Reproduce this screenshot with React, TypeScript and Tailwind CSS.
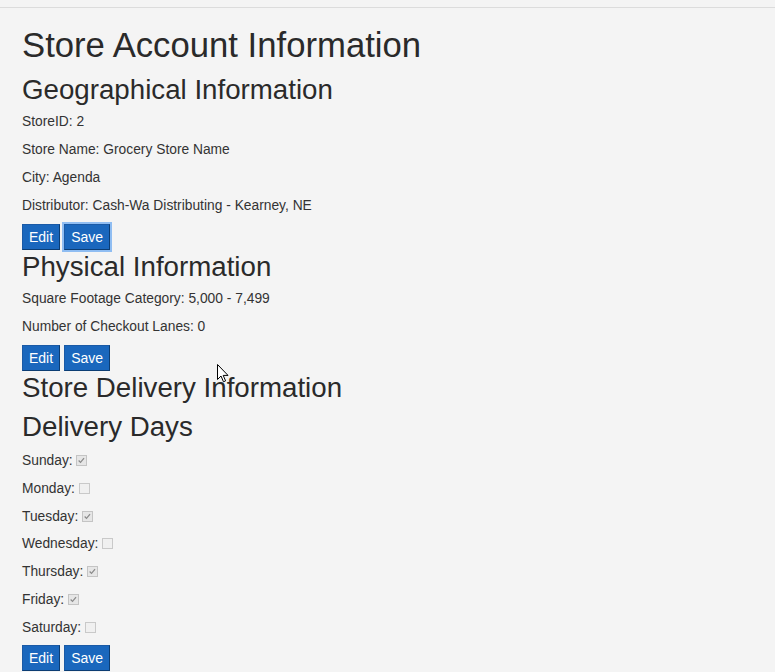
import React from 'react';

const days: { name: string; checked: boolean }[] = [
  { name: 'Sunday', checked: true },
  { name: 'Monday', checked: false },
  { name: 'Tuesday', checked: true },
  { name: 'Wednesday', checked: false },
  { name: 'Thursday', checked: true },
  { name: 'Friday', checked: true },
  { name: 'Saturday', checked: false },
];

function Heading({ children, className = '' }: { children: React.ReactNode; className?: string }) {
  return (
    <h2 className={`text-[27.7px] leading-[30px] pt-[2px] font-normal text-[#2a2a2a] mb-[7px] ${className}`}>
      {children}
    </h2>
  );
}

function Line({ children }: { children: React.ReactNode }) {
  return <p className="text-[13.8px] leading-[20px] mb-[8px]">{children}</p>;
}

function Buttons({ focusSave = false }: { focusSave?: boolean }) {
  const base =
    'inline-block align-top h-[26px] px-[6px] text-[14px] leading-[20px] text-white bg-[#1a67bd] border border-[#1a5aa6] border-r-[#0c3d73] border-b-[#0c3d73]';
  return (
    <div className="flex gap-[4px] h-[26px]">
      <button className={base}>Edit</button>
      <button className={`${base} ${focusSave ? 'ring-2 ring-[#8fbdf2]' : ''}`}>Save</button>
    </div>
  );
}

function Check({ checked }: { checked: boolean }) {
  return (
    <span
      className={`inline-block align-[-1px] ml-[0px] w-[11px] h-[11px] border ${
        checked ? 'border-[#c4c4c4] bg-[#e6e6e6]' : 'border-[#c9c9c9] bg-[#f0f0f0]'
      }`}
    >
      {checked && (
        <svg viewBox="0 0 11 11" className="w-[9px] h-[9px]">
          <path d="M2 5.5 L4.3 7.8 L8.6 2.6" fill="none" stroke="#8a8a8a" strokeWidth="1.5" />
        </svg>
      )}
    </span>
  );
}

export default function App() {
  return (
    <div
      className="relative min-h-[672px] bg-[#f4f4f4] text-[#333]"
      style={{ fontFamily: '"Liberation Sans", Arial, sans-serif' }}
    >
      <div className="h-[8px] border-b border-[#dcdcdc]" />
      <div className="px-[22px]">
        <h1 className="mt-[17px] text-[34.7px] leading-[40px] font-normal text-[#2a2a2a]">
          Store Account Information
        </h1>

        <Heading className="mt-[8px]">Geographical Information</Heading>
        <Line>StoreID: 2</Line>
        <Line>Store Name: Grocery Store Name</Line>
        <Line>City: Agenda</Line>
        <Line>Distributor: Cash-Wa Distributing - Kearney, NE</Line>
        <Buttons focusSave />

        <Heading>Physical Information</Heading>
        <Line>Square Footage Category: 5,000 - 7,499</Line>
        <Line>Number of Checkout Lanes: 0</Line>
        <Buttons />

        <Heading>Store Delivery Information</Heading>
        <Heading className="mt-[2px] mb-[9px]">Delivery Days</Heading>
        {days.map((d) => (
          <p key={d.name} className="text-[13.8px] leading-[20px] mb-[7.8px]">
            {d.name}: <Check checked={d.checked} />
          </p>
        ))}
        <div className="-mt-[1px]">
          <Buttons />
        </div>
      </div>

      <svg
        className="absolute left-[217px] top-[364px] w-[12px] h-[19px]"
        viewBox="0 0 12 19"
      >
        <path
          d="M0.5 0.5 L0.5 15.5 L4 12 L6.5 17.8 L8.6 16.9 L6.2 11.4 L11 11.4 Z"
          fill="#fff"
          stroke="#000"
          strokeWidth="1"
          strokeLinejoin="round"
        />
      </svg>
    </div>
  );
}
